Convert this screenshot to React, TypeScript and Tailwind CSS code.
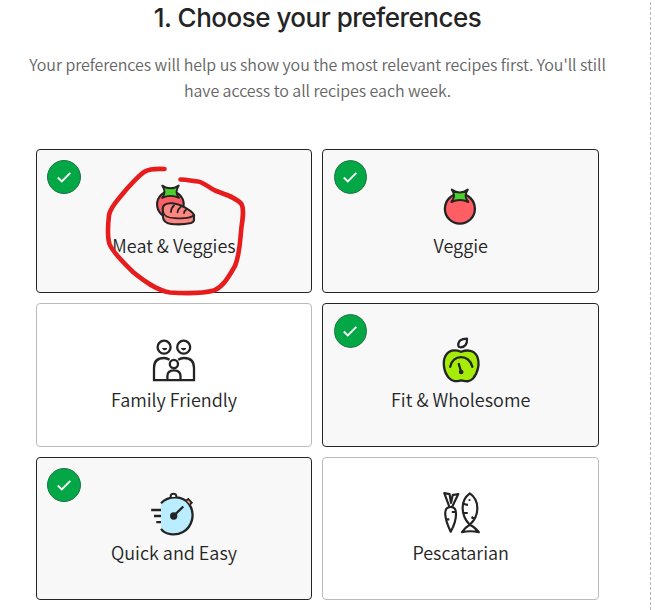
import type { ReactNode } from 'react';

const INK = '#242424';

function Tomato() {
  return (
    <g stroke={INK} strokeWidth="2.3" strokeLinejoin="round">
      <circle cx="29.9" cy="28.7" r="15" fill="#ff5f64" />
      <path d="M21.8 9.6Q29.8 15.2 37.8 9.6Q33.2 15.8 38.4 22Q30 17.8 21.4 22Q26.4 15.8 21.8 9.6Z" fill="#4bd029" strokeWidth="2" />
    </g>
  );
}

function MeatVeggies() {
  return (
    <g stroke={INK} strokeWidth="2.1" strokeLinejoin="round" strokeLinecap="round">
      <circle cx="26.4" cy="24.5" r="13.3" fill="#ff5f64" />
      <path d="M18.3 5.6Q26.5 11 34.7 5.6Q30.2 12 35 17.8Q26.5 14 18.1 17.8Q22.8 12 18.3 5.6Z" fill="#4bd029" strokeWidth="1.9" />
      <path d="M18.8 30C18 25 22 23 28 23.3C37 24 48 31 50 35V40Q49.8 42.2 47 43Q38 45.2 27 44Q19.3 43 19 37Z" fill="#ff8580" />
      <path d="M18.9 31C19.5 36 24 38 31 38.2C40 38.8 46 38.5 50 35.3M27 32Q27 28 30 25.5M33.5 32.3Q33.8 29 36.7 27M40 33Q40 30.8 42.5 29.5" fill="none" strokeWidth="1.8" />
    </g>
  );
}

function Family() {
  return (
    <g fill="none" stroke={INK} strokeWidth="2.3">
      <circle cx="20.1" cy="17.2" r="6.5" />
      <circle cx="39.7" cy="17.2" r="6.5" />
      <path d="M18.5 18.5H23Q20.8 21.5 18.5 18.5ZM37.2 18.5H42Q39.7 21.5 37.2 18.5Z" fill={INK} strokeWidth="1" />
      <circle cx="29.9" cy="34" r="4.1" />
      <path d="M25.5 29.7Q23 28 20 28Q10 28 10 38V50.2H50V38Q50 28 40 28Q36.8 28 34.2 29.7M23.4 50V46Q23.4 40.3 29.9 40.3Q36.5 40.3 36.5 46V50" />
    </g>
  );
}

function Apple() {
  return (
    <g stroke={INK} strokeWidth="2.3" strokeLinecap="round" strokeLinejoin="round">
      <path d="M31.2 21.8C37 19.5 44 20 47 26C50.2 33 48 43 43 48.5C39 52.6 35.5 51.2 31.2 50.3C26 51.5 23 52.2 19 48C13.6 42 12.4 32 15.5 25.8C19 19.8 25 19.5 31.2 21.8Z" fill="#a5ec0a" />
      <path d="M28.3 15.8Q27.8 8.7 37 8.6Q37.4 17 30.5 17.3Q28.6 17.2 28.3 15.8Z" fill="white" />
      <path d="M20.2 36.8C22.3 24.3 39.5 23.6 42.3 36.8M28.8 34L31 41.5" fill="none" />
      <circle cx="31.2" cy="42" r="1.2" fill={INK} />
    </g>
  );
}

function Stopwatch() {
  return (
    <g stroke={INK} strokeWidth="2.3">
      <path d="M17 18.2C25 9.8 39 10.7 45 19C52 29 48 42 39 47C31 51.4 21 49.4 17 43.8Z" fill="#b9edff" stroke="none" />
      <path d="M17 18.2C25 9.8 39 10.7 45 19C52 29 48 42 39 47C31 51.4 21 49.4 17 43.8" fill="none" />
      <path d="M26.7 12V10.9Q27 8.8 29.5 8.8T32.3 10.9V12" fill="#f8f8f8" strokeWidth="2" />
      <path d="M42.2 15.5L44.3 14L47.8 17.8L46 19.5" fill="#ff9b7f" strokeWidth="1.8" />
      <path d="M30 30.5L39.3 21.5M7.2 25H17M10 31H17M12.3 37.1H17" />
      <circle cx="29.7" cy="31" r="2.5" fill={INK} />
    </g>
  );
}

function Pescatarian() {
  return (
    <g fill="none" stroke={INK} strokeWidth="2.2" strokeLinejoin="round">
      <path d="M20.7 22Q15.2 22 15.2 28.5C15.4 36 18.7 42.5 20.7 46.7C23.3 42 26.2 35 26 28.5Q26 22 20.7 22ZM19.4 21.8L14.3 8.2L19.6 9.2L21 17.8L22.7 10.2L28.3 9L22.2 21.8M21.8 27H25.5M15.7 34.3H19.3" />
      <path d="M39.8 8.4C29.5 16 31 31 39.8 39.8C50.2 30 49.5 15 39.8 8.4ZM39.8 39.8Q35.5 42.2 32 47.2Q40 45.3 48.8 47.2Q44.5 41.8 39.8 39.8ZM33.3 18.3Q35.5 19.8 38 19.8M33 28H37.8M41.5 32L44.2 34" />
      <circle cx="39.5" cy="15" r="1.1" fill={INK} stroke="none" />
    </g>
  );
}

type Preference = { label: string; selected: boolean; viewBox: string; icon: ReactNode };

const preferences: Preference[] = [
  { label: 'Meat & Veggies', selected: true, viewBox: '0 0 60 55', icon: <MeatVeggies /> },
  { label: 'Veggie', selected: true, viewBox: '1 0 60 55', icon: <Tomato /> },
  { label: 'Family Friendly', selected: false, viewBox: '0 4 60 55', icon: <Family /> },
  { label: 'Fit & Wholesome', selected: true, viewBox: '1 4 60 55', icon: <Apple /> },
  { label: 'Quick and Easy', selected: true, viewBox: '0 3 60 55', icon: <Stopwatch /> },
  { label: 'Pescatarian', selected: false, viewBox: '1 3 60 55', icon: <Pescatarian /> },
];

function PreferenceCard({ label, selected, viewBox, icon }: Preference) {
  return (
    <button
      className={`group relative flex flex-col items-center rounded border pt-[30px] ${
        selected ? 'border-[#242424] bg-[#f8f8f8]' : 'border-[#bbbbbb] bg-white'
      }`}
    >
      {selected && (
        <span className="absolute left-[10.2px] top-2.5 flex h-[34px] w-[33.5px] items-center justify-center rounded-full border border-[#1d7540] bg-[#04a746]">
          <svg width="16" height="14" viewBox="0 0 16 14" fill="none" stroke="white" strokeWidth="1.8">
            <path d="M1.8 7.5L5.8 11.4L14.3 2.8" />
          </svg>
        </span>
      )}
      <svg width="60" height="55" viewBox={viewBox} className="block shrink-0">
        {icon}
      </svg>
      <span className="-mt-0.5 whitespace-nowrap font-['Noto_Sans_CJK_SC',sans-serif] text-[18px] font-[350] leading-6 text-[#242424] group-nth-[n+5]:-mt-[3px]">
        {label}
      </span>
    </button>
  );
}

export default function App() {
  return (
    <main className="relative h-[610px] w-[655px] overflow-hidden bg-white">
      <header className="w-[635px] text-center">
        <h1 className="whitespace-nowrap pt-0.5 font-['Inter',sans-serif] text-[26px] font-medium leading-8 tracking-[-0.5px] text-[#242424]">
          1. Choose your preferences
        </h1>
        <p className="pt-[17px] font-['Noto_Sans_CJK_SC',sans-serif] text-[16px] font-[350] leading-[26px] tracking-[-0.07px] text-[#656565]">
          Your preferences will help us show you the most relevant recipes first. You'll still
          <br />
          have access to all recipes each week.
        </p>
      </header>
      <section className="ml-9 mt-[46px] grid w-[563px] grid-cols-[276px_276.6px] grid-rows-[144px_144px_143px] gap-x-[10.4px] gap-y-2.5">
        {preferences.map((preference) => (
          <PreferenceCard key={preference.label} {...preference} />
        ))}
      </section>
      <svg className="absolute right-1 top-0" width="1" height="610">
        <path d="M0.5 2V610" stroke="#b5b5b5" strokeDasharray="3 2" />
      </svg>
      <svg className="pointer-events-none absolute left-[95px] top-[155px]" width="160" height="145" viewBox="0 0 160 145" fill="none" stroke="#e71d1d" strokeWidth="4.6" strokeLinecap="round" strokeLinejoin="round">
        <path d="M69.5 14C61 13.6 55 13.5 50 16.5C44 20 37 28 30 36C23 45 16 51 14 60C13 69 12 81 14.5 89C18 98 29 108 38 117C49 126 61 135 75 137.5C91 138.5 107 138.7 119 135.5C129 131 134 121 140 111C145 99 145 85 146.5 72C148 62 149.2 54 146.5 49C142 43 132 40 120 35.5C113 32 108 27 103 26.5C97 25.8 91 24.5 85.5 24.5" />
      </svg>
    </main>
  );
}
